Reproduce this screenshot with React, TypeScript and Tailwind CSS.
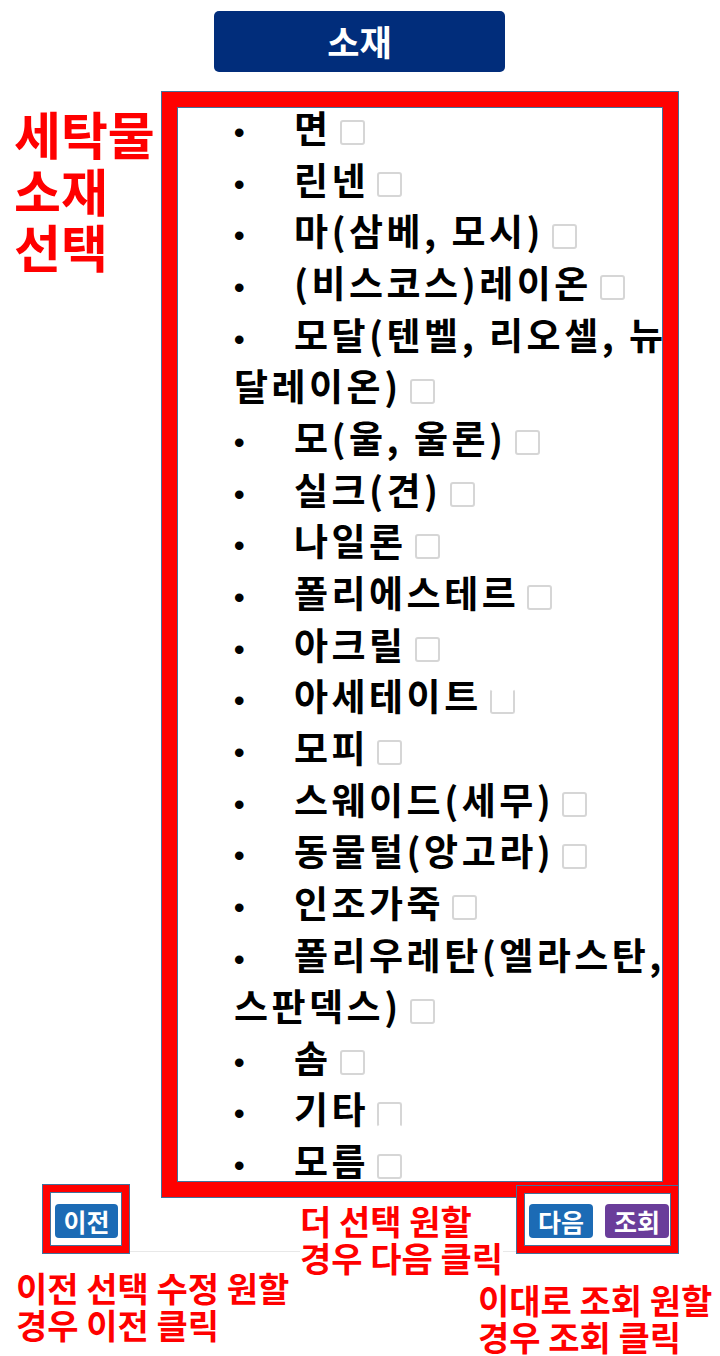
import React from 'react';

type Item = { label: string; cont?: string; box?: 'top' | 'bottom' };

const items: Item[] = [
  { label: '면' },
  { label: '린넨' },
  { label: '마(삼베, 모시)' },
  { label: '(비스코스)레이온' },
  { label: '모달(텐벨, 리오셀, 뉴', cont: '달레이온)' },
  { label: '모(울, 울론)' },
  { label: '실크(견)' },
  { label: '나일론' },
  { label: '폴리에스테르' },
  { label: '아크릴' },
  { label: '아세테이트', box: 'top' },
  { label: '모피' },
  { label: '스웨이드(세무)' },
  { label: '동물털(앙고라)' },
  { label: '인조가죽' },
  { label: '폴리우레탄(엘라스탄,', cont: '스판덱스)' },
  { label: '솜' },
  { label: '기타', box: 'bottom' },
  { label: '모름' },
];

function CheckBox({ open }: { open?: 'top' | 'bottom' }) {
  const edge =
    open === 'top' ? 'border-t-transparent' : open === 'bottom' ? 'border-b-transparent' : '';
  return (
    <span
      className={`inline-block w-[25px] h-[25px] ml-[8px] align-middle rounded-[3px] border-2 border-[#d6d6d6] ${edge}`}
    />
  );
}

function Btn({ children, color, w }: { children: React.ReactNode; color: string; w: string }) {
  return (
    <div
      className={`${w} h-[34px] rounded-[4px] ${color} flex items-center justify-center text-white text-[25px] leading-none`}
    >
      {children}
    </div>
  );
}

export default function App() {
  return (
    <div className="relative w-[720px] h-[1356px] bg-white overflow-hidden font-['Noto_Sans_CJK_KR',sans-serif]">
      {/* header */}
      <div className="pt-[11px] pl-[214px]">
        <div className="w-[291px] h-[61px] rounded-[5px] bg-[#012d7b] flex items-center justify-center text-white text-[35px] font-bold">
          소재
        </div>
      </div>

      {/* label + framed list */}
      <div className="mt-[19px] flex">
        <div className="w-[161px] pl-[14px] pt-[14px] text-[#ff0000] text-[51px] font-bold leading-[56.5px] whitespace-nowrap">
          <p>세탁물</p>
          <p>소재</p>
          <p>선택</p>
        </div>
        <div className="w-[518px] h-[1107px] border border-[#41719c] bg-[#ff0000] p-[15px]">
          <div className="h-full border border-[#41719c] bg-white overflow-hidden">
            <ul className="-mt-[6px] pl-[56px] text-[37px] font-bold leading-[51.65px] tracking-[3.5px] text-black">
              {items.map((it) => (
                <li key={it.label} className="whitespace-nowrap">
                  <span className="inline-block w-[60px] font-['Liberation_Sans',sans-serif] text-[30px] leading-none tracking-normal">
                    •
                  </span>
                  {it.label}
                  {it.cont && (
                    <>
                      <br />
                      {it.cont}
                    </>
                  )}
                  <CheckBox open={it.box} />
                </li>
              ))}
            </ul>
          </div>
        </div>
      </div>

      {/* buttons + notes */}
      <div className="relative z-10 -mt-[14px] flex pl-[16px] text-[#ff0000] text-[34px] font-bold leading-[37px]">
        <div className="absolute left-[42px] top-[67px] w-[474px] h-px bg-[#e8e8e8]" />

        <div className="w-[284px]">
          <div className="relative ml-[26px] w-[88px] h-[70px] border border-[#41719c] bg-[#ff0000] p-[7px]">
            <div className="h-full border border-[#41719c] bg-white pl-[4px] pt-[11px]">
              <Btn color="bg-[#1c6bb5]" w="w-[63px]">
                이전
              </Btn>
            </div>
          </div>
          <p className="mt-[15px] whitespace-nowrap">
            이전 선택 수정 원할
            <br />
            경우 이전 클릭
          </p>
        </div>

        <div className="w-[178px]">
          <p className="relative mt-[18px] w-max bg-white whitespace-nowrap">
            더 선택 원할
            <br />
            경우 다음 클릭
          </p>
        </div>

        <div>
          <div className="relative ml-[38px] mt-[1px] w-[163px] h-[69px] border border-[#41719c] bg-[#ff0000] p-[7px]">
            <div className="h-full border border-[#41719c] bg-white pl-[4px] pt-[10px] flex gap-[12px]">
              <Btn color="bg-[#1c6bb5]" w="w-[64px]">
                다음
              </Btn>
              <Btn color="bg-[#6a3d9a]" w="w-[64px]">
                조회
              </Btn>
            </div>
          </div>
          <p className="mt-[27px] whitespace-nowrap">
            이대로 조회 원할
            <br />
            경우 조회 클릭
          </p>
        </div>
      </div>
    </div>
  );
}
